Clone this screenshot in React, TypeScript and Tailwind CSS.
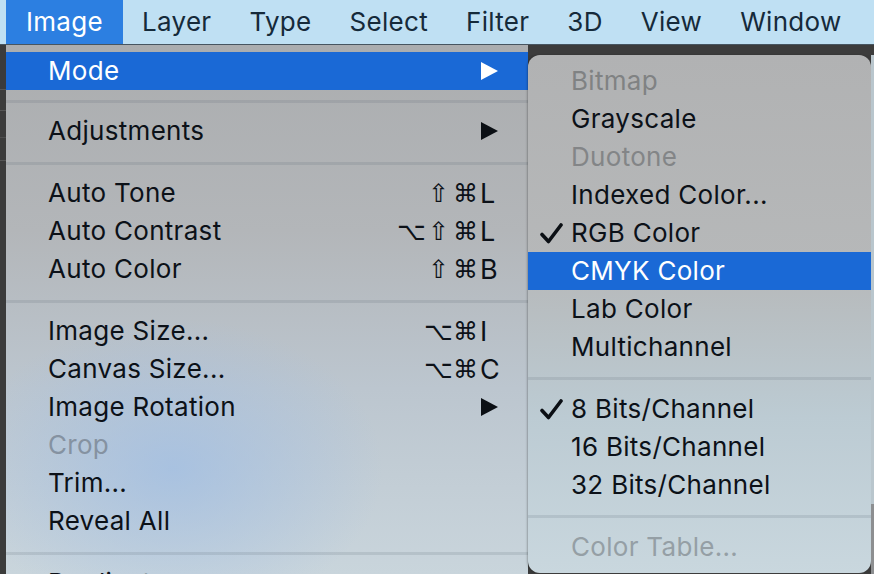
import React from "react";

type Item =
  | { kind: "item"; label: string; mods?: string[]; keyChar?: string; arrow?: boolean; disabled?: boolean; active?: boolean }
  | { kind: "sep"; h: number; at: number };

const mainItems: Item[] = [
  { kind: "item", label: "Mode", arrow: true, active: true },
  { kind: "sep", h: 22, at: 10 },
  { kind: "item", label: "Adjustments", arrow: true },
  { kind: "sep", h: 24, at: 12 },
  { kind: "item", label: "Auto Tone", mods: ["", "⇧", "⌘"], keyChar: "L" },
  { kind: "item", label: "Auto Contrast", mods: ["⌥", "⇧", "⌘"], keyChar: "L" },
  { kind: "item", label: "Auto Color", mods: ["", "⇧", "⌘"], keyChar: "B" },
  { kind: "sep", h: 24, at: 12 },
  { kind: "item", label: "Image Size...", mods: ["", "⌥", "⌘"], keyChar: "I" },
  { kind: "item", label: "Canvas Size...", mods: ["", "⌥", "⌘"], keyChar: "C" },
  { kind: "item", label: "Image Rotation", arrow: true },
  { kind: "item", label: "Crop", disabled: true },
  { kind: "item", label: "Trim..." },
  { kind: "item", label: "Reveal All" },
  { kind: "sep", h: 24, at: 12 },
  { kind: "item", label: "Duplicate..." },
];

type SubItem =
  | { kind: "item"; label: string; checked?: boolean; disabled?: boolean; active?: boolean; tone?: string }
  | { kind: "sep" };

const subItems: SubItem[] = [
  { kind: "item", label: "Bitmap", disabled: true, tone: "text-[#808283]" },
  { kind: "item", label: "Grayscale" },
  { kind: "item", label: "Duotone", disabled: true, tone: "text-[#838587]" },
  { kind: "item", label: "Indexed Color..." },
  { kind: "item", label: "RGB Color", checked: true },
  { kind: "item", label: "CMYK Color", active: true },
  { kind: "item", label: "Lab Color" },
  { kind: "item", label: "Multichannel" },
  { kind: "sep" },
  { kind: "item", label: "8 Bits/Channel", checked: true },
  { kind: "item", label: "16 Bits/Channel" },
  { kind: "item", label: "32 Bits/Channel" },
  { kind: "sep" },
  { kind: "item", label: "Color Table...", disabled: true, tone: "text-[#959fa5]" },
];

function Arrow({ white }: { white?: boolean }) {
  return (
    <svg width="17" height="18" viewBox="0 0 17 18">
      <polygon points="0,0 17,9 0,18" fill={white ? "#ffffff" : "#0b0f14"} />
    </svg>
  );
}

function Check() {
  return (
    <svg width="23" height="21" viewBox="0 0 23 21">
      <path d="M2 11.5 L8.5 18.5 L21 2" fill="none" stroke="#0b0f14" strokeWidth="3.6" strokeLinecap="round" strokeLinejoin="round" />
    </svg>
  );
}

const menubar = ["Image", "Layer", "Type", "Select", "Filter", "3D", "View", "Window"];

export default function App() {
  return (
    <div className="w-[874px] h-[574px] overflow-hidden bg-[#3a3a3a] flex flex-col font-['Inter','Liberation_Sans',sans-serif] tracking-[0.3px]">
      {/* Menu bar */}
      <div className="h-[45px] shrink-0 bg-[#bfe0f3] border-b border-[#475560] flex items-stretch pl-[6px]">
        {menubar.map((m, i) => (
          <div
            key={m}
            className={
              i === 0
                ? "h-[44px] px-[20px] flex items-center bg-[#2c7fe1] text-white text-[26px] leading-none"
                : "h-[44px] px-[19px] flex items-center text-[#152a3a] text-[26px] leading-none"
            }
          >
            {m}
          </div>
        ))}
      </div>

      <div className="flex-1 flex min-h-0">
        {/* left app strip */}
        <div className="w-[6px] shrink-0 bg-[#3b3b3b] flex flex-col">
          <div className="h-[44px]" />
          <div className="h-[1px] bg-[#555]" />
          <div className="h-[20px]" />
          <div className="h-[1px] bg-[#555]" />
          <div className="h-[26px]" />
          <div className="h-[1px] bg-[#4d4d4d]" />
          <div className="h-[22px]" />
          <div className="h-[1px] bg-[#555]" />
        </div>

        {/* main menu */}
        <div className="w-[522px] shrink-0 flex flex-col pt-[7px] overflow-hidden bg-[radial-gradient(ellipse_210px_150px_at_32%_80%,rgba(160,190,228,0.75),rgba(160,190,228,0)),linear-gradient(to_bottom,#abadaf_0%,#b3b6b9_35%,#bcc6cf_65%,#c9d5dc_100%)]">
          {mainItems.map((it, idx) => {
            if (it.kind === "sep") {
              return (
                <div key={idx} className="shrink-0 flex flex-col" style={{ height: it.h }}>
                  <div style={{ height: it.at }} />
                  <div className="h-[3px] bg-[rgba(90,100,110,0.16)]" />
                </div>
              );
            }
            const rowCls = it.active
              ? "h-[38px] shrink-0 flex items-center pl-[42px] pr-[23px] bg-[#1a69d6] text-white"
              : it.disabled
              ? "h-[38px] shrink-0 flex items-center pl-[42px] pr-[23px] text-[#8592a1]"
              : "h-[38px] shrink-0 flex items-center pl-[42px] pr-[23px] text-[#0c1118]";
            return (
              <div key={idx} className={rowCls}>
                <div className="flex-1 text-[26px] leading-none whitespace-nowrap">{it.label}</div>
                {it.mods && (
                  <div className="flex items-center font-['DejaVu_Sans',sans-serif] text-[25px] leading-none tracking-normal">
                    {it.mods.map((m, j) => (
                      <div key={j} className="w-[27px] flex justify-center">
                        {m}
                      </div>
                    ))}
                  </div>
                )}
                <div className="w-[24px] ml-[2px] flex items-center text-[27px] leading-none">
                  {it.arrow ? <Arrow white={it.active} /> : it.keyChar ? <span className="-ml-[1px]">{it.keyChar}</span> : null}
                </div>
              </div>
            );
          })}
        </div>

        {/* submenu column */}
        <div className="w-[343px] shrink-0 flex flex-col">
          <div className="h-[10px] shrink-0 bg-[#3c3c3c]" />
          <div className="h-[518px] shrink-0 rounded-[12px] overflow-hidden flex flex-col pt-[7px] shadow-[-1px_0_2px_rgba(0,0,0,0.25)] bg-[linear-gradient(to_bottom,#b1b2b3_0%,#b6b8b9_40%,#bccbd3_70%,#c9d7de_100%)]">
            {subItems.map((it, idx) => {
              if (it.kind === "sep") {
                return (
                  <div key={idx} className="h-[24px] shrink-0 flex flex-col">
                    <div className="h-[11px]" />
                    <div className="h-[3px] bg-[rgba(90,100,110,0.16)]" />
                  </div>
                );
              }
              const cls = it.active
                ? "h-[38px] shrink-0 flex items-center bg-[#1a69d6] text-white"
                : it.disabled
                ? `h-[38px] shrink-0 flex items-center ${it.tone}`
                : "h-[38px] shrink-0 flex items-center text-[#0c1118]";
              return (
                <div key={idx} className={cls}>
                  <div className="w-[43px] shrink-0 flex justify-end pr-[8px]">{it.checked ? <Check /> : null}</div>
                  <div className="text-[26px] leading-none whitespace-nowrap">{it.label}</div>
                </div>
              );
            })}
          </div>
          <div className="flex-1 bg-[#3c3c3c]" />
        </div>

        {/* right strip */}
        <div className="flex-1 flex flex-col">
          <div className="h-[10px] bg-[#3c3c3c]" />
          <div className="flex-1 bg-[#b9c6cd]" />
          <div className="h-[70px] bg-[#8d8f91]" />
        </div>
      </div>
    </div>
  );
}
